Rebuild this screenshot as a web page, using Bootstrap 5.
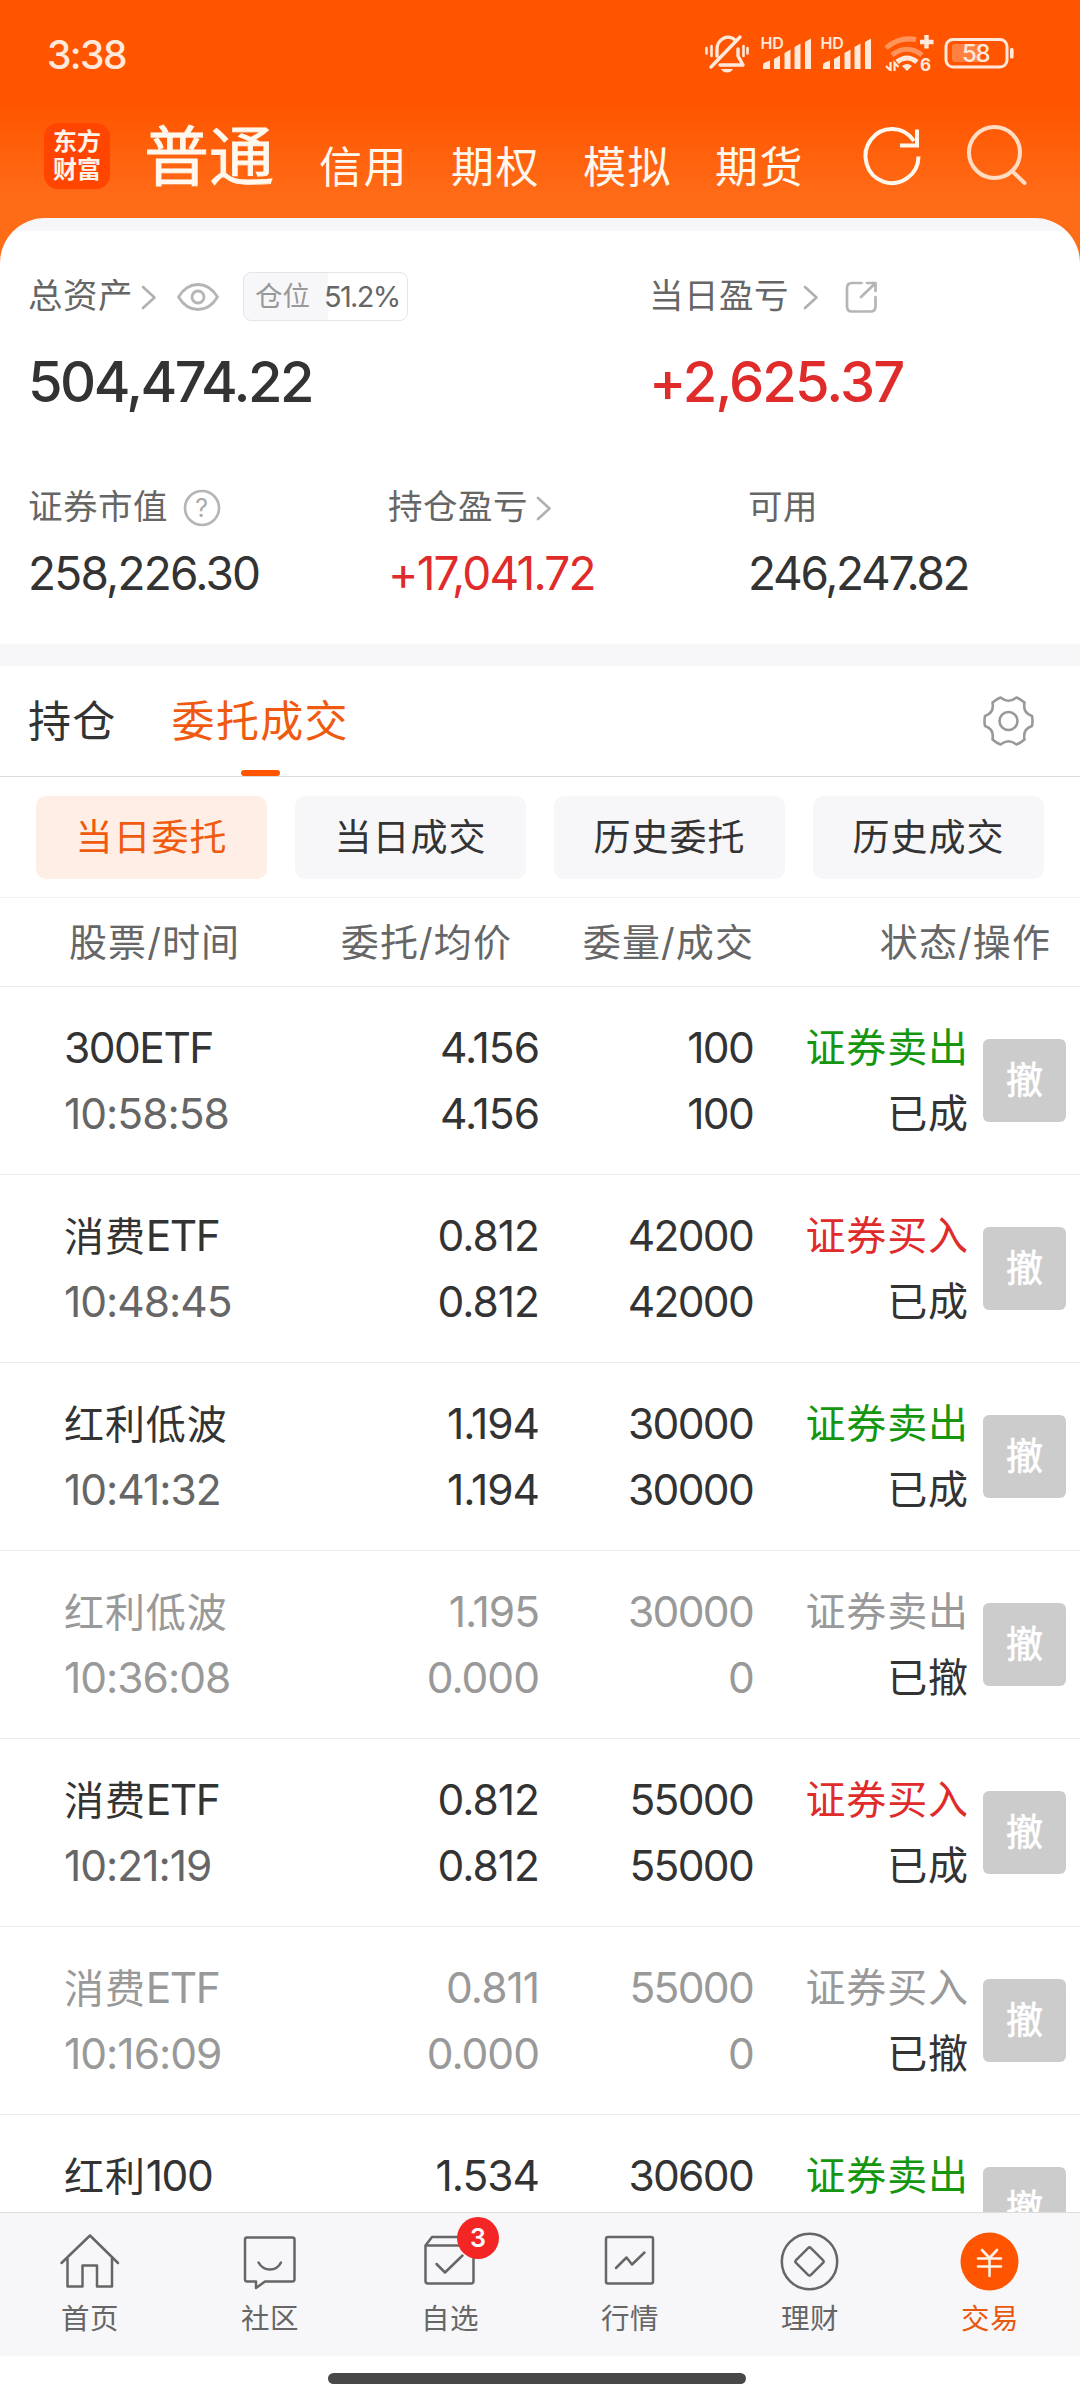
<!DOCTYPE html>
<html lang="zh-CN">
<head>
<meta charset="utf-8">
<meta name="viewport" content="width=device-width, initial-scale=1">
<title>交易</title>
<link href="https://cdn.jsdelivr.net/npm/bootstrap@5.3.0/dist/css/bootstrap.min.css" rel="stylesheet">
<style>
  body { font-family: Inter, "Noto Sans CJK SC", sans-serif; color: #333; background: #fff; line-height: 1; }
  svg { display: block; flex: none; overflow: visible; }
  .app { width: 1080px; height: 2400px; white-space: nowrap; }
  .hero { background: linear-gradient(#ff5500 0, #ff5500 105px, #ff6c18 200px); }
  .statusbar { height: 108px; padding: 0 66px 0 47px; color: #ffe9db; }
  .clock { font-size: 39px; font-weight: 500; letter-spacing: -1.6px; }
  .topnav { height: 110px; padding: 0 52px 0 44px; color: #fff8ee; }
  .logo { width: 66px; height: 66px; border-radius: 14px; background: #ff4500; font-size: 24px; font-weight: 700; line-height: 28px; margin-top: 15px; color: #fff4ea; }
  .acct-main { font-size: 65px; line-height: 66px; margin: 16px 0 0 34px; -webkit-text-stroke: .8px #fff8ee; }
  .acct { font-size: 43px; letter-spacing: 1.5px; line-height: 44px; margin: 37px 0 0 43px; }
  .acct-main + .acct { margin-left: 45px; }
  .panel { height: 426px; border-radius: 45px 45px 0 0; background: linear-gradient(#f7f7fa 0, #f7f7fa 12.5px, #fff 12.5px); padding: 54px 28px 0 28px; }
  .lbl { font-size: 34.5px; letter-spacing: .5px; color: #666; height: 49px; }
  .pos-tag { width: 165px; height: 49px; border: 1px solid #e5e5e8; border-radius: 8px; background: linear-gradient(90deg, #f7f7fa 84px, #fff 84px); font-size: 29px; color: #666; margin-left: 24px; padding-left: 11px; }
  .pos-tag small { font-size: 27.5px; color: #999; letter-spacing: 0; }
  .big { font-size: 56px; font-weight: 450; height: 60px; margin-top: 31px; letter-spacing: -2.5px; }
  .big.up { letter-spacing: -1.9px; }
  .mid { font-size: 46px; height: 50px; margin-top: 16px; letter-spacing: -1.8px; }
  .up { color: #e02b2b; }
  .dn { color: #14960f; }
  .band { height: 22px; background: #f7f7fa; }
  .tabs { height: 111px; border-bottom: 1px solid #ddd; padding: 0 46px 0 28px; font-size: 43px; letter-spacing: 1.3px; }
  .tabs .on { color: #f05a10; }
  .tabs .on::after { content: ""; position: absolute; left: 50%; bottom: 0; width: 39px; height: 6px; margin-left: -19px; border-radius: 3px; background: #ff5500; }
  .pills { height: 121px; padding: 19px 36px 0; gap: 28px; border-bottom: 1px solid #f3f3f5; }
  .pill { height: 83px; border-radius: 10px; background: #f7f7fa; font-size: 37px; letter-spacing: 1px; flex: 1; }
  .pill.on { background: #ffeee6; color: #f05a10; }
  .thead-row { height: 89px; border-bottom: 1px solid #ebebeb; color: #666; font-size: 38px; letter-spacing: 1.1px; }
  .c1 { width: 240px; padding-left: 64px; }
  .c2 { width: 299px; }
  .c3 { width: 214px; }
  .c4 { width: 216px; }
  .thead-row .c1 { padding-left: 69px; }
  .thead-row .c2 { width: 272px; }
  .thead-row .c3 { width: 242px; }
  .thead-row .c4 { width: 297px; }
  .order { height: 188px; border-bottom: 1px solid #ebebeb; padding-top: 28px; font-size: 42.5px; }
  .order .ln { height: 66px; line-height: 66px; }
  .order .c1, .order .c2 { letter-spacing: -1px; }
  .order .c3 { letter-spacing: -1.7px; }
  .order .c1 .ln:first-child { letter-spacing: -1.5px; }
  .cn { font-size: 40px; letter-spacing: .9px; }
  .order .c1 .ln + .ln { color: #666; }
  .order.void .ln, .order.void .c1 .ln + .ln { color: #999; }
  .order.void .c4 .ln + .ln { color: #333; }
  .cancel { width: 83px; height: 83px; border-radius: 6px; background: #ccc; color: #fff; font-size: 37px; margin: 24px 0 0 14px; -webkit-text-stroke: .7px #fff; }
  .bottomnav { height: 144px; background: #f7f7fa; border-top: 1px solid #ddd; color: #666; font-size: 28.5px; letter-spacing: .5px; }
  .bottomnav .item { width: 180px; padding-top: 17px; }
  .bottomnav .item svg { height: 62px; width: 80px; }
  .bottomnav .txt { line-height: 36px; margin-top: 9px; }
  .bub { left: 97px; top: 4px; width: 42px; height: 42px; background: #f42525; color: #fff; font-size: 25px; font-weight: 600; letter-spacing: 0; }
  .homebar { height: 44px; padding-top: 17px; }
  .homebar div { width: 418px; height: 11px; border-radius: 6px; background: #484848; margin-left: -6px; }
  .ico { fill: none; stroke-linecap: round; stroke-linejoin: round; }
</style>
<script src="https://cdn.jsdelivr.net/npm/bootstrap@5.3.0/dist/js/bootstrap.bundle.min.js"></script>
</head>
<body>
<div class="app d-flex flex-column overflow-hidden">
  <div class="hero">
    <div class="statusbar d-flex align-items-center justify-content-between">
      <span class="clock">3:38</span>
      <svg width="310" height="40" viewBox="704 35 310 40" fill="#ffe9db">
        <g class="ico" stroke="#ffe9db" stroke-width="3.4">
          <path d="M717 57V51a11 12 0 0 1 19-9M711 68L740 38M738 50v7l5 9H720"/>
          <path d="M706.500 49v5.500M711.500 47v10M743.500 47v10M747.500 49v5.500" stroke-width="2.600"/>
        </g>
        <path d="M721 70h12q-2 3.500-6 3.500t-6-3.500z"/>
        <g id="sig">
          <text x="760.500" y="50" font-size="16" font-weight="600" letter-spacing="-.3">HD</text>
          <path d="M763 70v-4q0-2 2-2.500l5-2V70zM774 70V60l6-3.500V70zM784.500 70V54l6-3.500V70zM794.500 70V48l6-3.500V70zM805 70V43l6-3.500V70z"/>
        </g>
        <use href="#sig" x="60"/>
        <g fill="none" stroke="#ffe9db">
          <path d="M886 49q13-11.500 30-8.500" stroke-width="5" opacity=".42"/>
          <path d="M892 56q15-11.500 30 0" stroke-width="5" opacity=".42"/>
          <path d="M897 63q10-8 20 0" stroke-width="5"/>
          <path d="M926.500 36v13.500M920 43h13.500" stroke-width="4.400"/>
          <path d="M890.500 63v9M886 67l4 4M894.500 72v-8l4 4" stroke-width="2.200"/>
        </g>
        <path d="M902 67q5-4 10 0l-5 5z"/>
        <text x="920" y="72" font-size="17" font-weight="700">6</text>
        <rect x="946" y="40.500" width="61" height="27.500" rx="7" fill="none" stroke="#ffe9db" stroke-width="3"/>
        <path d="M952 48q0-3 3-3h26v18h-26q-3 0-3-3z" opacity=".3"/>
        <rect x="1010" y="49" width="3.600" height="10.500" rx="1.500"/>
        <text x="962" y="63" font-size="24" font-weight="500" letter-spacing="-1.300">58</text>
      </svg>
    </div>
    <div class="topnav d-flex align-items-start">
      <div class="logo d-flex flex-column align-items-center justify-content-center"><span>东方</span><span>财富</span></div>
      <span class="acct-main">普通</span>
      <span class="acct">信用</span><span class="acct">期权</span><span class="acct">模拟</span><span class="acct">期货</span>
      <svg class="ico ms-auto" width="165" height="62" viewBox="863 125 165 62" stroke-width="4" style="margin-top:17px">
        <path d="M918.500 156.500A26.500 27 0 1 1 914 141" stroke="#fff8ee" stroke-linecap="butt"/>
        <path d="M917 129.500V145.500H900" stroke="#fff8ee" stroke-linecap="butt" stroke-linejoin="miter"/>
        <ellipse cx="994.500" cy="152.500" rx="25.500" ry="25.500" stroke="#ffdcc2"/>
        <path d="M1012 171l12.500 12" stroke="#ffdcc2"/>
      </svg>
    </div>
    <div class="panel">
      <div class="d-flex">
        <div style="width:621px">
          <div class="lbl d-flex align-items-center">总资产
            <svg class="ico" width="14" height="24" viewBox="143 285 14 24" style="margin-left:9px" stroke="#b0b0b0" stroke-width="2.600"><path d="M144 287l11.500 10.500L144 308"/></svg>
            <svg class="ico" width="42" height="30" viewBox="178 281 42 30" style="margin-left:21px" stroke="#b5b5b5" stroke-width="2.800"><path d="M179.500 296Q187 283.500 199 283.500T218.500 296Q211 308.500 199 308.500T179.500 296z"/><circle cx="199" cy="296" r="6"/></svg>
            <span class="pos-tag d-flex align-items-center"><small>仓位</small><span style="margin-left:14px;letter-spacing:-1.700px">51.2%</span></span>
          </div>
          <div class="big d-flex align-items-center">504,474.22</div>
        </div>
        <div>
          <div class="lbl d-flex align-items-center">当日盈亏
            <svg class="ico" width="14" height="24" viewBox="143 285 14 24" style="margin-left:15px" stroke="#b0b0b0" stroke-width="2.600"><path d="M144 287l11.500 10.500L144 308"/></svg>
            <svg class="ico" width="32" height="32" viewBox="844 281 32 32" style="margin-left:27px" stroke="#b5b5b5" stroke-width="2.700"><path d="M860.500 283H851q-5 0-5 5v18.500q0 5 5 5h18.500q5 0 5-5V297M866 283h8.500v8M874 283.500L860 297"/></svg>
          </div>
          <div class="big up d-flex align-items-center">+2,625.37</div>
        </div>
      </div>
      <div class="d-flex" style="margin-top:71px">
        <div style="width:360px">
          <div class="lbl d-flex align-items-center">证券市值
            <svg width="38" height="38" viewBox="183 488 38 38" style="margin-left:15px"><circle cx="202" cy="507" r="17" fill="none" stroke="#b5b5b5" stroke-width="2.600"/><text x="202" y="516" text-anchor="middle" font-size="25" fill="#aaa">?</text></svg>
          </div>
          <div class="mid d-flex align-items-center">258,226.30</div>
        </div>
        <div style="width:360px">
          <div class="lbl d-flex align-items-center">持仓盈亏
            <svg class="ico" width="14" height="24" viewBox="143 285 14 24" style="margin-left:9px" stroke="#b0b0b0" stroke-width="2.600"><path d="M144 287l11.500 10.500L144 308"/></svg>
          </div>
          <div class="mid up d-flex align-items-center">+17,041.72</div>
        </div>
        <div>
          <div class="lbl d-flex align-items-center">可用</div>
          <div class="mid d-flex align-items-center" style="letter-spacing:-2.300px">246,247.82</div>
        </div>
      </div>
    </div>
  </div>
  <div class="band flex-shrink-0"></div>
  <div class="tabs d-flex align-items-stretch flex-shrink-0">
    <div class="d-flex align-items-center">持仓</div>
    <div class="on position-relative d-flex align-items-center" style="margin-left:55px">委托成交</div>
    <svg class="ico ms-auto align-self-center" width="51" height="50" viewBox="-25.500 -25 51 50" stroke="#999" stroke-width="2.600"><path d="M-8-23.500Q-12-22-16-18.500Q-14-8-23.500-5Q-24.500 0-23.500 5Q-14 8-16 18.500Q-12 22-8 23.500Q0 17 8 23.500Q12 22 16 18.500Q14 8 23.500 5Q24.500 0 23.500-5Q14-8 16-18.500Q12-22 8-23.500Q0-17-8-23.500z"/><circle r="9"/></svg>
  </div>
  <div class="pills d-flex flex-shrink-0">
    <div class="pill on d-flex align-items-center justify-content-center">当日委托</div>
    <div class="pill d-flex align-items-center justify-content-center">当日成交</div>
    <div class="pill d-flex align-items-center justify-content-center">历史委托</div>
    <div class="pill d-flex align-items-center justify-content-center">历史成交</div>
  </div>
  <div class="thead-row d-flex align-items-center flex-shrink-0">
    <div class="c1">股票/时间</div><div class="c2 text-end">委托/均价</div><div class="c3 text-end">委量/成交</div><div class="c4 text-end">状态/操作</div>
  </div>
  <div class="flex-grow-1 overflow-hidden" style="min-height:0">
    <div class="order d-flex">
      <div class="c1"><div class="ln">300ETF</div><div class="ln">10:58:58</div></div>
      <div class="c2 text-end"><div class="ln">4.156</div><div class="ln">4.156</div></div>
      <div class="c3 text-end"><div class="ln">100</div><div class="ln">100</div></div>
      <div class="c4 text-end cn"><div class="ln dn">证券卖出</div><div class="ln">已成</div></div>
      <div class="cancel d-flex align-items-center justify-content-center">撤</div>
    </div>
    <div class="order d-flex">
      <div class="c1"><div class="ln"><span class="cn">消费</span>ETF</div><div class="ln">10:48:45</div></div>
      <div class="c2 text-end"><div class="ln">0.812</div><div class="ln">0.812</div></div>
      <div class="c3 text-end"><div class="ln">42000</div><div class="ln">42000</div></div>
      <div class="c4 text-end cn"><div class="ln up">证券买入</div><div class="ln">已成</div></div>
      <div class="cancel d-flex align-items-center justify-content-center">撤</div>
    </div>
    <div class="order d-flex">
      <div class="c1"><div class="ln"><span class="cn">红利低波</span></div><div class="ln">10:41:32</div></div>
      <div class="c2 text-end"><div class="ln">1.194</div><div class="ln">1.194</div></div>
      <div class="c3 text-end"><div class="ln">30000</div><div class="ln">30000</div></div>
      <div class="c4 text-end cn"><div class="ln dn">证券卖出</div><div class="ln">已成</div></div>
      <div class="cancel d-flex align-items-center justify-content-center">撤</div>
    </div>
    <div class="order void d-flex">
      <div class="c1"><div class="ln"><span class="cn">红利低波</span></div><div class="ln">10:36:08</div></div>
      <div class="c2 text-end"><div class="ln">1.195</div><div class="ln">0.000</div></div>
      <div class="c3 text-end"><div class="ln">30000</div><div class="ln">0</div></div>
      <div class="c4 text-end cn"><div class="ln">证券卖出</div><div class="ln">已撤</div></div>
      <div class="cancel d-flex align-items-center justify-content-center">撤</div>
    </div>
    <div class="order d-flex">
      <div class="c1"><div class="ln"><span class="cn">消费</span>ETF</div><div class="ln">10:21:19</div></div>
      <div class="c2 text-end"><div class="ln">0.812</div><div class="ln">0.812</div></div>
      <div class="c3 text-end"><div class="ln">55000</div><div class="ln">55000</div></div>
      <div class="c4 text-end cn"><div class="ln up">证券买入</div><div class="ln">已成</div></div>
      <div class="cancel d-flex align-items-center justify-content-center">撤</div>
    </div>
    <div class="order void d-flex">
      <div class="c1"><div class="ln"><span class="cn">消费</span>ETF</div><div class="ln">10:16:09</div></div>
      <div class="c2 text-end"><div class="ln">0.811</div><div class="ln">0.000</div></div>
      <div class="c3 text-end"><div class="ln">55000</div><div class="ln">0</div></div>
      <div class="c4 text-end cn"><div class="ln">证券买入</div><div class="ln">已撤</div></div>
      <div class="cancel d-flex align-items-center justify-content-center">撤</div>
    </div>
    <div class="order d-flex">
      <div class="c1"><div class="ln"><span class="cn">红利</span>100</div></div>
      <div class="c2 text-end"><div class="ln">1.534</div></div>
      <div class="c3 text-end"><div class="ln">30600</div></div>
      <div class="c4 text-end cn"><div class="ln dn">证券卖出</div></div>
      <div class="cancel d-flex align-items-center justify-content-center">撤</div>
    </div>
  </div>
  <div class="bottomnav d-flex flex-shrink-0">
    <div class="item d-flex flex-column align-items-center">
      <svg class="ico" viewBox="50 2230 80 62" stroke="#666" stroke-width="2.500"><path d="M61.500 2263L90 2235.500L118 2263M67.500 2258v28.500H82.500V2265.500H97V2286.500H112V2258"/></svg>
      <span class="txt">首页</span>
    </div>
    <div class="item d-flex flex-column align-items-center">
      <svg class="ico" viewBox="230 2230 80 62" stroke="#666" stroke-width="2.500"><path d="M247 2237.500h45.500q2 0 2 2v39.500q0 2.500-2 2.500H265L256 2288V2281.500H247q-2 0-2-2.500V2239.500q0-2 2-2zM258.500 2262.500q4 7 11.500 7t11-7"/></svg>
      <span class="txt">社区</span>
    </div>
    <div class="item position-relative d-flex flex-column align-items-center">
      <svg class="ico" viewBox="410 2230 80 62" stroke="#666" stroke-width="2.500"><path d="M425.500 2245.500L432 2237H468L473.500 2245.500V2281q0 2.500-2.500 2.500H428q-2.500 0-2.500-2.500zM425.500 2245.500H473.500M436.500 2264L445 2272.500L462.500 2255.500"/></svg>
      <span class="bub position-absolute rounded-circle d-flex align-items-center justify-content-center">3</span>
      <span class="txt">自选</span>
    </div>
    <div class="item d-flex flex-column align-items-center">
      <svg class="ico" viewBox="590 2230 80 62" stroke="#666" stroke-width="2.500"><rect x="606" y="2237" width="47" height="46.500" rx="2"/><path d="M616 2268L626.500 2257.500L632 2264.500L644.500 2252.500"/></svg>
      <span class="txt">行情</span>
    </div>
    <div class="item d-flex flex-column align-items-center">
      <svg class="ico" viewBox="770 2230 80 62" stroke="#666" stroke-width="2.500"><circle cx="809.500" cy="2261.500" r="27.700"/><rect x="-10.500" y="-10.500" width="21" height="21" rx="2" transform="translate(809.500 2261.500) rotate(45)"/></svg>
      <span class="txt">理财</span>
    </div>
    <div class="item d-flex flex-column align-items-center">
      <svg class="ico" viewBox="950 2230 80 62"><circle cx="989.500" cy="2261.500" r="29" fill="#ff5500"/><path d="M982 2250L989.500 2258L997 2250M978 2258.500H1001M978 2266.500H1001M989.500 2258V2276" stroke="#fff1e6" stroke-width="2.600"/></svg>
      <span class="txt" style="color:#e8590f">交易</span>
    </div>
  </div>
  <div class="homebar d-flex justify-content-center flex-shrink-0"><div></div></div>
</div>
</body>
</html>
